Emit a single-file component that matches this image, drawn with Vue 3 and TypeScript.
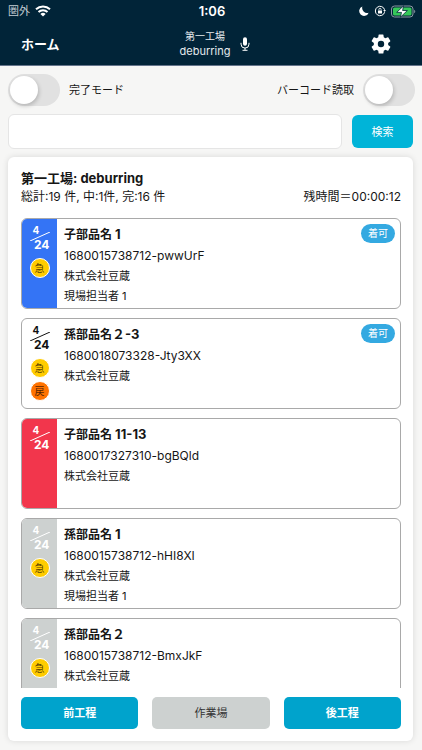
<script setup lang="ts">
import { ref } from 'vue'

interface Part {
  id: number
  name: string
  suffix: string
  code: string
  company: string
  worker?: string
  tone: 'blue' | 'white' | 'red' | 'gray'
  urgent?: boolean
  returned?: boolean
  ready?: boolean
}

const doneMode = ref(false)
const barcodeMode = ref(false)
const query = ref('')

const parts: Part[] = [
  { id: 1, name: '子部品名', suffix: ' 1', code: '1680015738712-pwwUrF', company: '株式会社豆蔵', worker: '現場担当者 1', tone: 'blue', urgent: true, ready: true },
  { id: 2, name: '孫部品名', suffix: '２-3', code: '1680018073328-Jty3XX', company: '株式会社豆蔵', tone: 'white', urgent: true, returned: true, ready: true },
  { id: 3, name: '子部品名', suffix: ' 11-13', code: '1680017327310-bgBQld', company: '株式会社豆蔵', tone: 'red' },
  { id: 4, name: '孫部品名', suffix: ' 1', code: '1680015738712-hHI8XI', company: '株式会社豆蔵', worker: '現場担当者 1', tone: 'gray', urgent: true },
  { id: 5, name: '孫部品名', suffix: '２', code: '1680015738712-BmxJkF', company: '株式会社豆蔵', tone: 'gray', urgent: true },
]
</script>

<template>
  <div class="page">
    <header class="header">
      <div class="status">
        <span class="carrier">圏外
          <svg class="wifi" viewBox="0 0 16 12" aria-hidden="true">
            <path d="M1 4.2a10.2 10.2 0 0 1 14 0" />
            <path d="M3.5 7a6.6 6.6 0 0 1 9 0" />
            <path class="fill" d="M8 11.6 5.4 9a3.8 3.8 0 0 1 5.2 0z" />
          </svg>
        </span>
        <span class="clock">1:06</span>
        <span class="indicators">
          <svg class="moon" viewBox="0 0 10 10" aria-hidden="true">
            <path d="M3.4.4A4.9 4.9 0 1 0 9.7 6.7 5 5 0 0 1 3.4.4z" fill="#fff" />
          </svg>
          <svg class="lock" viewBox="0 0 12 12" aria-hidden="true">
            <path d="M10.6 7.2A4.7 4.7 0 1 1 10.6 4.8" fill="none" stroke="#fff" stroke-width="1" />
            <path d="M9.2 4.9h2.7l-1.2 2z" fill="#fff" />
            <rect x="4" y="5.4" width="4" height="3.2" rx=".5" fill="#fff" />
            <path d="M4.9 5.5V4.4a1.1 1.1 0 0 1 2.2 0v1.1" fill="none" stroke="#fff" stroke-width=".8" />
          </svg>
          <svg class="battery" viewBox="0 0 25 13" aria-hidden="true">
            <rect x=".5" y="1" width="21.5" height="11" rx="3" fill="none" stroke="#8b98a2" />
            <rect x="2" y="2.5" width="18.5" height="8" rx="1.6" fill="#35c759" />
            <path d="M23.2 4.8c1.4.4 1.4 3 0 3.4z" fill="#8b98a2" />
            <path d="M12.6.8 5.7 7.4h4.8L9.4 12.2l7-6.7h-4.8z" fill="#fff" stroke="#012438" stroke-width=".8" />
          </svg>
        </span>
      </div>
      <nav class="bar">
        <a class="home" href="#">ホーム</a>
        <div class="place">
          <span class="place-name"><small>第一工場</small><span>deburring</span></span>
          <button class="icon-button" type="button" aria-label="音声入力">
            <svg class="mic" viewBox="0 0 10 14" aria-hidden="true">
              <rect x="3" y=".3" width="4" height="8.5" rx="2" fill="#fff" />
              <path d="M1 5.8v1.3a4 4 0 0 0 8 0V5.8M5 11v2.2M2.5 13.3h5" fill="none" stroke="#fff" />
            </svg>
          </button>
        </div>
        <button class="icon-button settings" type="button" aria-label="設定">
          <svg class="gear" viewBox="2 2 20 20" aria-hidden="true">
            <path fill="#fff" d="M19.14 12.94c.04-.3.06-.61.06-.94s-.02-.64-.07-.94l2.03-1.58a.49.49 0 0 0 .12-.61l-1.92-3.32a.49.49 0 0 0-.59-.22l-2.39.96a7.03 7.03 0 0 0-1.62-.94l-.36-2.54A.48.48 0 0 0 13.92 2.4h-3.84a.48.48 0 0 0-.47.41l-.36 2.54c-.59.24-1.13.57-1.62.94l-2.39-.96a.48.48 0 0 0-.59.22L2.74 8.87a.48.48 0 0 0 .12.61l2.03 1.58c-.05.3-.09.63-.09.94s.02.64.07.94l-2.03 1.58a.49.49 0 0 0-.12.61l1.92 3.32c.12.22.37.29.59.22l2.39-.96c.5.38 1.03.7 1.62.94l.36 2.54c.05.24.24.41.48.41h3.84c.24 0 .44-.17.47-.41l.36-2.54c.59-.24 1.13-.56 1.62-.94l2.39.96c.22.08.47 0 .59-.22l1.92-3.32a.48.48 0 0 0-.12-.61zM12 15.2a3.2 3.2 0 1 1 0-6.4 3.2 3.2 0 0 1 0 6.4z" />
          </svg>
        </button>
      </nav>
    </header>

    <main class="content">
      <div class="modes">
        <label class="mode"><input v-model="doneMode" class="switch" type="checkbox" role="switch">完了モード</label>
        <label class="mode">バーコード読取<input v-model="barcodeMode" class="switch" type="checkbox" role="switch"></label>
      </div>

      <form class="search" @submit.prevent>
        <input v-model="query" class="search-box" type="text" aria-label="検索">
        <button class="search-button" type="submit">検索</button>
      </form>

      <section class="panel">
        <h1 class="panel-title">第一工場: deburring</h1>
        <div class="summary">
          <span>総計:19 件, 中:1件, 完:16 件</span>
          <span>残時間＝00:00:12</span>
        </div>

        <ul class="list">
          <li v-for="part in parts" :key="part.id" class="card">
            <div class="strip" :class="part.tone">
              <div class="date">
                <span class="month">4</span>
                <svg class="slash" viewBox="0 0 20 9" aria-hidden="true"><path d="M0 9 20 0" /></svg>
                <span class="day">24</span>
              </div>
              <span v-if="part.urgent" class="mark urgent">急</span>
              <span v-if="part.returned" class="mark returned">戻</span>
            </div>
            <div class="details">
              <h2 class="name">{{ part.name }}<span class="suffix">{{ part.suffix }}</span></h2>
              <p class="code">{{ part.code }}</p>
              <p>{{ part.company }}</p>
              <p v-if="part.worker">{{ part.worker }}</p>
            </div>
            <span v-if="part.ready" class="badge">着可</span>
          </li>
        </ul>

        <div class="steps">
          <button class="step" type="button">前工程</button>
          <button class="step current" type="button">作業場</button>
          <button class="step" type="button">後工程</button>
        </div>
      </section>
    </main>
  </div>
</template>

<style>
body {
  margin: 0;
  background: #f6f6f5;
}
</style>

<style scoped>
.page {
  display: flex;
  flex-direction: column;
  box-sizing: border-box;
  height: 100vh;
  font-family: Inter, "Noto Sans CJK JP", sans-serif;
  font-size: 12px;
  line-height: 20px;
  color: #161616;
}
button,
input {
  font: inherit;
  margin: 0;
}
svg {
  display: block;
}
.header {
  background: #012438;
  border-bottom: 1px solid #64748b;
  color: #fff;
}
.status,
.bar {
  display: grid;
  grid-template-columns: 1fr auto 1fr;
  align-items: center;
}
.status {
  height: 22px;
  padding: 0 6px 0 8px;
}
.carrier,
.indicators {
  display: flex;
  align-items: center;
  gap: 5px;
}
.carrier {
  font-size: 11px;
  color: #c5ced5;
}
.wifi {
  width: 16px;
  height: 12px;
  fill: none;
  stroke: #fff;
  stroke-width: 2;
}
.wifi .fill {
  fill: #fff;
  stroke: none;
}
.clock {
  font-size: 13px;
  font-weight: 600;
}
.indicators {
  justify-content: flex-end;
}
.moon {
  width: 10px;
  height: 10px;
}
.lock {
  width: 12px;
  height: 12px;
}
.battery {
  width: 25px;
  height: 13px;
}
.bar {
  height: 43px;
  padding: 0 31px 0 21px;
}
.home {
  color: #fff;
  font-size: 13px;
  font-weight: 700;
  text-decoration: none;
}
.place {
  display: flex;
  align-items: center;
  gap: 10px;
  margin-left: 18px;
}
.place-name {
  display: flex;
  flex-direction: column;
  align-items: center;
  line-height: 15px;
  font-size: 11px;
  color: #e5eaed;
}
.place-name small {
  font-size: 10px;
}
.icon-button {
  padding: 0;
  border: 0;
  background: none;
}
.mic {
  width: 10px;
  height: 14px;
}
.settings {
  justify-self: end;
}
.gear {
  width: 20px;
  height: 20px;
}
.content {
  display: flex;
  flex: 1;
  flex-direction: column;
  min-height: 0;
  padding: 8px 9px 9px 8px;
}
.modes,
.mode,
.search,
.summary {
  display: flex;
  align-items: center;
}
.modes,
.summary {
  justify-content: space-between;
}
.modes {
  margin-right: -2px;
}
.mode {
  gap: 9px;
  font-size: 11px;
}
.switch {
  appearance: none;
  box-sizing: border-box;
  width: 52px;
  height: 32px;
  padding: 2px;
  border-radius: 16px;
  background: #e1e1e1;
}
.switch::before {
  content: "";
  display: block;
  width: 28px;
  height: 28px;
  border-radius: 50%;
  background: #fff;
  box-shadow: 1px 2px 4px rgba(0, 0, 0, 0.2);
}
.switch:checked {
  background: #00b4d8;
}
.switch:checked::before {
  margin-left: 20px;
}
.search {
  gap: 10px;
  margin: 8px 0;
}
.search-box {
  box-sizing: border-box;
  flex: 1;
  min-width: 0;
  height: 35px;
  padding: 0 10px;
  border: 1px solid #e5e5e5;
  border-radius: 6px;
  background: #fff;
}
.search-button {
  width: 61px;
  height: 33px;
  padding: 0;
  border: 0;
  border-radius: 6px;
  background: #00b4d8;
  color: #fff;
  font-size: 11px;
}
.panel {
  display: flex;
  flex: 1;
  flex-direction: column;
  min-height: 0;
  padding: 11px 12px 12px 13px;
  border-radius: 6px;
  background: #fff;
  box-shadow: 0 0 6px rgba(0, 0, 0, 0.12);
}
.panel-title,
.name {
  margin: 0 0 1px;
  font-weight: 700;
}
.panel-title,
.suffix {
  font-size: 13px;
}
.summary {
  line-height: 16px;
  font-size: 12px;
}
.list {
  display: flex;
  flex: 1;
  flex-direction: column;
  gap: 9px;
  min-height: 0;
  margin: 13px 0 9px;
  padding: 0;
  overflow-y: auto;
  scrollbar-width: none;
  list-style: none;
}
.card {
  position: relative;
  display: flex;
  flex: none;
  box-sizing: border-box;
  min-height: 91px;
  border: 1px solid #a9a9a9;
  border-radius: 6px;
  overflow: hidden;
}
.strip {
  display: flex;
  flex-direction: column;
  align-items: center;
  width: 35px;
  padding-top: 5px;
  color: #fff;
}
.blue {
  background: #3474f5;
}
.red {
  background: #f2364c;
}
.gray {
  background: #cdd1d0;
}
.white {
  color: #111;
}
.date {
  display: flex;
  flex-direction: column;
  width: 20px;
  margin-bottom: 5px;
  font-weight: 700;
}
.month {
  margin-left: 3px;
  line-height: 12px;
  font-size: 10px;
}
.slash {
  width: 20px;
  height: 9px;
  margin: -4px 0;
  fill: none;
  stroke: currentColor;
}
.day {
  align-self: flex-end;
  line-height: 16px;
  font-size: 12px;
}
.mark {
  box-sizing: border-box;
  width: 20px;
  height: 20px;
  margin-bottom: 3px;
  border: 1px solid #fff;
  border-radius: 50%;
  line-height: 18px;
  font-size: 10px;
  text-align: center;
}
.urgent {
  background: #fc0;
  color: #5c4300;
}
.returned {
  background: #ff7300;
  color: #5a2500;
}
.details {
  flex: 1;
  min-width: 0;
  padding: 5px 7px 0;
}
.details p {
  margin: 0;
  font-size: 11px;
}
.details .code {
  font-size: 12px;
}
.name {
  font-size: 12px;
}
.badge {
  position: absolute;
  top: 5px;
  right: 5px;
  width: 34px;
  border-radius: 10px;
  line-height: 19px;
  background: #34a9e1;
  color: #fff;
  font-size: 10px;
  text-align: center;
}
.steps {
  display: grid;
  grid-template-columns: repeat(3, 1fr);
  gap: 14px;
}
.step {
  height: 32px;
  padding: 0;
  border: 0;
  border-radius: 5px;
  background: #00a3cc;
  color: #fff;
  font-size: 11px;
  font-weight: 700;
}
.current {
  background: #cdd1d0;
  color: #333;
  font-weight: 400;
}
</style>
